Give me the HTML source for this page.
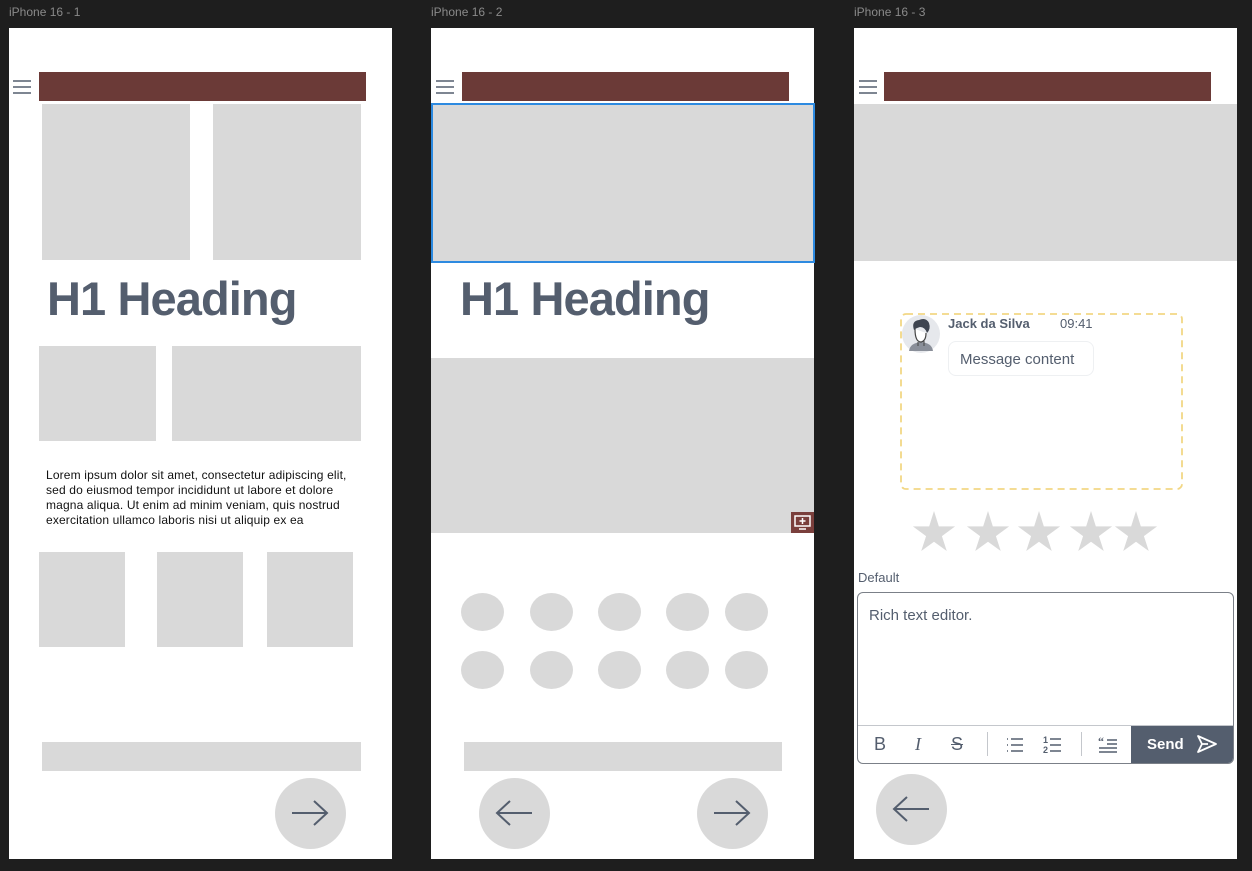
<!DOCTYPE html>
<html><head><meta charset="utf-8"><style>
*{margin:0;padding:0;box-sizing:border-box}
body{width:1252px;height:871px;background:#1e1e1e;position:relative;overflow:hidden;font-family:"Liberation Sans",sans-serif}
.a{position:absolute}
.lbl{color:#8a8a8a;font-size:12px}
.fr{background:#fff}
.g{background:#d9d9d9}
.red{background:#6b3a37}
.h1{font-weight:bold;font-size:47px;color:#545e6e;letter-spacing:-0.9px;line-height:1}
.circ{border-radius:50%;background:#d9d9d9}
</style></head><body>
<div class="a lbl" style="left:9px;top:5px">iPhone 16 - 1</div>
<div class="a lbl" style="left:431px;top:5px">iPhone 16 - 2</div>
<div class="a lbl" style="left:854px;top:5px">iPhone 16 - 3</div>

<!-- Frame 1 -->
<div class="a fr" style="left:9px;top:28px;width:383px;height:831px"></div>
<svg class="a" style="left:13px;top:80px" width="18" height="14"><path d="M0 1H18M0 7H18M0 13H18" stroke="#545e6e" stroke-width="1.6"/></svg>
<div class="a red" style="left:39px;top:72px;width:327px;height:29px"></div>
<div class="a g" style="left:42px;top:104px;width:148px;height:156px"></div>
<div class="a g" style="left:213px;top:104px;width:148px;height:156px"></div>
<div class="a h1" style="left:47px;top:275px">H1 Heading</div>
<div class="a g" style="left:39px;top:346px;width:117px;height:95px"></div>
<div class="a g" style="left:172px;top:346px;width:189px;height:95px"></div>
<div class="a" style="left:46px;top:468px;width:340px;font-size:12px;line-height:15px;color:#111;letter-spacing:0.15px;white-space:nowrap">Lorem ipsum dolor sit amet, consectetur adipiscing elit,<br>sed do eiusmod tempor incididunt ut labore et dolore<br>magna aliqua. Ut enim ad minim veniam, quis nostrud<br>exercitation ullamco laboris nisi ut aliquip ex ea</div>
<div class="a g" style="left:39px;top:552px;width:86px;height:95px"></div>
<div class="a g" style="left:157px;top:552px;width:86px;height:95px"></div>
<div class="a g" style="left:267px;top:552px;width:86px;height:95px"></div>
<div class="a g" style="left:42px;top:742px;width:319px;height:29px"></div>
<div class="a circ" style="left:275px;top:778px;width:71px;height:71px"></div>
<svg class="a" style="left:290px;top:798px" width="40" height="30"><path d="M2 15H37M24 3L37 15L24 27" stroke="#545e6e" stroke-width="2" fill="none"/></svg>

<!-- Frame 2 -->
<div class="a fr" style="left:431px;top:28px;width:383px;height:831px"></div>
<svg class="a" style="left:436px;top:80px" width="18" height="14"><path d="M0 1H18M0 7H18M0 13H18" stroke="#545e6e" stroke-width="1.6"/></svg>
<div class="a red" style="left:462px;top:72px;width:327px;height:29px"></div>
<div class="a g" style="left:431px;top:103px;width:384px;height:160px;border:2px solid #2d8ae0"></div>
<div class="a h1" style="left:460px;top:275px">H1 Heading</div>
<div class="a g" style="left:431px;top:358px;width:383px;height:175px"></div>
<div class="a" style="left:791px;top:512px;width:23px;height:21px;background:#7a3f3c"></div>
<svg class="a" style="left:791px;top:512px" width="23" height="21"><rect x="4" y="4" width="15" height="10" fill="none" stroke="#fff" stroke-width="1.5"/><path d="M11.5 6V12M8.5 9H14.5M8 17H15" stroke="#fff" stroke-width="1.5"/></svg>
<div class="a circ" style="left:461px;top:593px;width:43px;height:38px"></div>
<div class="a circ" style="left:530px;top:593px;width:43px;height:38px"></div>
<div class="a circ" style="left:598px;top:593px;width:43px;height:38px"></div>
<div class="a circ" style="left:666px;top:593px;width:43px;height:38px"></div>
<div class="a circ" style="left:725px;top:593px;width:43px;height:38px"></div>
<div class="a circ" style="left:461px;top:651px;width:43px;height:38px"></div>
<div class="a circ" style="left:530px;top:651px;width:43px;height:38px"></div>
<div class="a circ" style="left:598px;top:651px;width:43px;height:38px"></div>
<div class="a circ" style="left:666px;top:651px;width:43px;height:38px"></div>
<div class="a circ" style="left:725px;top:651px;width:43px;height:38px"></div>
<div class="a g" style="left:464px;top:742px;width:318px;height:29px"></div>
<div class="a circ" style="left:479px;top:778px;width:71px;height:71px"></div>
<svg class="a" style="left:494px;top:798px" width="40" height="30"><path d="M38 15H3M16 3L3 15L16 27" stroke="#545e6e" stroke-width="2" fill="none"/></svg>
<div class="a circ" style="left:697px;top:778px;width:71px;height:71px"></div>
<svg class="a" style="left:712px;top:798px" width="40" height="30"><path d="M2 15H37M24 3L37 15L24 27" stroke="#545e6e" stroke-width="2" fill="none"/></svg>

<!-- Frame 3 -->
<div class="a fr" style="left:854px;top:28px;width:383px;height:831px"></div>
<svg class="a" style="left:859px;top:80px" width="18" height="14"><path d="M0 1H18M0 7H18M0 13H18" stroke="#545e6e" stroke-width="1.6"/></svg>
<div class="a red" style="left:884px;top:72px;width:327px;height:29px"></div>
<div class="a g" style="left:854px;top:104px;width:383px;height:157px"></div>
<svg class="a" style="left:900px;top:313px" width="283" height="177"><rect x="1" y="1" width="281" height="175" rx="5" fill="none" stroke="#f2d785" stroke-width="1.8" stroke-dasharray="7 5"/></svg>
<svg class="a" style="left:902px;top:315px" width="38" height="38"><circle cx="19" cy="19" r="19" fill="#e6e8ec"/><path d="M7 36Q8 28 19 27Q30 28 31 36Z" fill="#8a8f99"/><path d="M13 14Q13 27 19 27Q24 26 24 18" fill="#fff" stroke="#444" stroke-width="1.2"/><path d="M12 15Q9 6 17 5Q24 2 27 8Q29 14 25 18Q23 12 18 12Q14 13 12 15Z" fill="#3e4450"/><path d="M16 27V31M22 26V31" stroke="#444" stroke-width="1"/></svg>
<div class="a" style="left:948px;top:316px;font-size:13px;font-weight:bold;color:#545e6e">Jack da Silva</div>
<div class="a" style="left:1060px;top:316px;font-size:13px;color:#545e6e">09:41</div>
<div class="a" style="left:948px;top:341px;width:146px;height:35px;border:1px solid #eef0f2;border-radius:8px;font-size:15px;color:#545e6e;padding:9px 0 0 11px">Message content</div>
<svg class="a" style="left:910px;top:511px" width="250" height="42" fill="#d9d9d9">
<polygon transform="translate(2,0) scale(0.44)" points="50,0 61,35 98,35 68,57 79,91 50,70 21,91 32,57 2,35 39,35"/>
<polygon transform="translate(56,0) scale(0.44)" points="50,0 61,35 98,35 68,57 79,91 50,70 21,91 32,57 2,35 39,35"/>
<polygon transform="translate(107,0) scale(0.44)" points="50,0 61,35 98,35 68,57 79,91 50,70 21,91 32,57 2,35 39,35"/>
<polygon transform="translate(159,0) scale(0.44)" points="50,0 61,35 98,35 68,57 79,91 50,70 21,91 32,57 2,35 39,35"/>
<polygon transform="translate(204,0) scale(0.44)" points="50,0 61,35 98,35 68,57 79,91 50,70 21,91 32,57 2,35 39,35"/>
</svg>
<div class="a" style="left:858px;top:570px;font-size:13px;color:#545e6e">Default</div>
<div class="a" style="left:857px;top:592px;width:377px;height:172px;border:1px solid #7b8088;border-radius:6px;overflow:hidden">
 <div class="a" style="left:11px;top:14px;font-size:15px;color:#545e6e">Rich text editor.</div>
 <div class="a" style="left:0;top:132px;width:377px;height:1px;background:#c4c7cc"></div>
 <div class="a" style="left:273px;top:133px;width:104px;height:40px;background:#545e6e"></div>
 <div class="a" style="left:289px;top:143px;font-size:15px;font-weight:bold;color:#fff">Send</div>
 <svg class="a" style="left:337px;top:140px" width="24" height="22"><path d="M3 3L21 11L3 19L7 11Z M7 11H13" fill="none" stroke="#fff" stroke-width="1.8" stroke-linejoin="round"/></svg>
 <div class="a" style="left:16px;top:141px;font-size:18px;color:#545e6e">B</div>
 <div class="a" style="left:57px;top:141px;font-size:18px;color:#545e6e;font-style:italic;font-family:'Liberation Serif',serif">I</div>
 <div class="a" style="left:93px;top:141px;font-size:18px;color:#545e6e;text-decoration:line-through">S</div>
 <div class="a" style="left:129px;top:139px;width:1px;height:24px;background:#c4c7cc"></div>
 <svg class="a" style="left:148px;top:144px" width="18" height="16"><path d="M1 2H2M1 8H2M1 14H2M5 2H17M5 8H17M5 14H17" stroke="#545e6e" stroke-width="1.5"/></svg>
 <svg class="a" style="left:185px;top:141px" width="20" height="20"><text x="0" y="9" font-size="9" font-weight="bold" fill="#545e6e" font-family="Liberation Sans">1</text><text x="0" y="19" font-size="9" font-weight="bold" fill="#545e6e" font-family="Liberation Sans">2</text><path d="M7 5H18M7 11H18M7 17H18" stroke="#545e6e" stroke-width="1.5"/></svg>
 <div class="a" style="left:223px;top:139px;width:1px;height:24px;background:#c4c7cc"></div>
 <svg class="a" style="left:240px;top:142px" width="20" height="18"><text x="0" y="10" font-size="12" font-weight="bold" fill="#545e6e" font-family="Liberation Serif">“</text><path d="M9 5H19M9 9H19M1 13H19M1 17H19" stroke="#545e6e" stroke-width="1.5"/></svg>
</div>
<div class="a circ" style="left:876px;top:774px;width:71px;height:71px"></div>
<svg class="a" style="left:891px;top:794px" width="40" height="30"><path d="M38 15H3M16 3L3 15L16 27" stroke="#545e6e" stroke-width="2" fill="none"/></svg>
</body></html>
